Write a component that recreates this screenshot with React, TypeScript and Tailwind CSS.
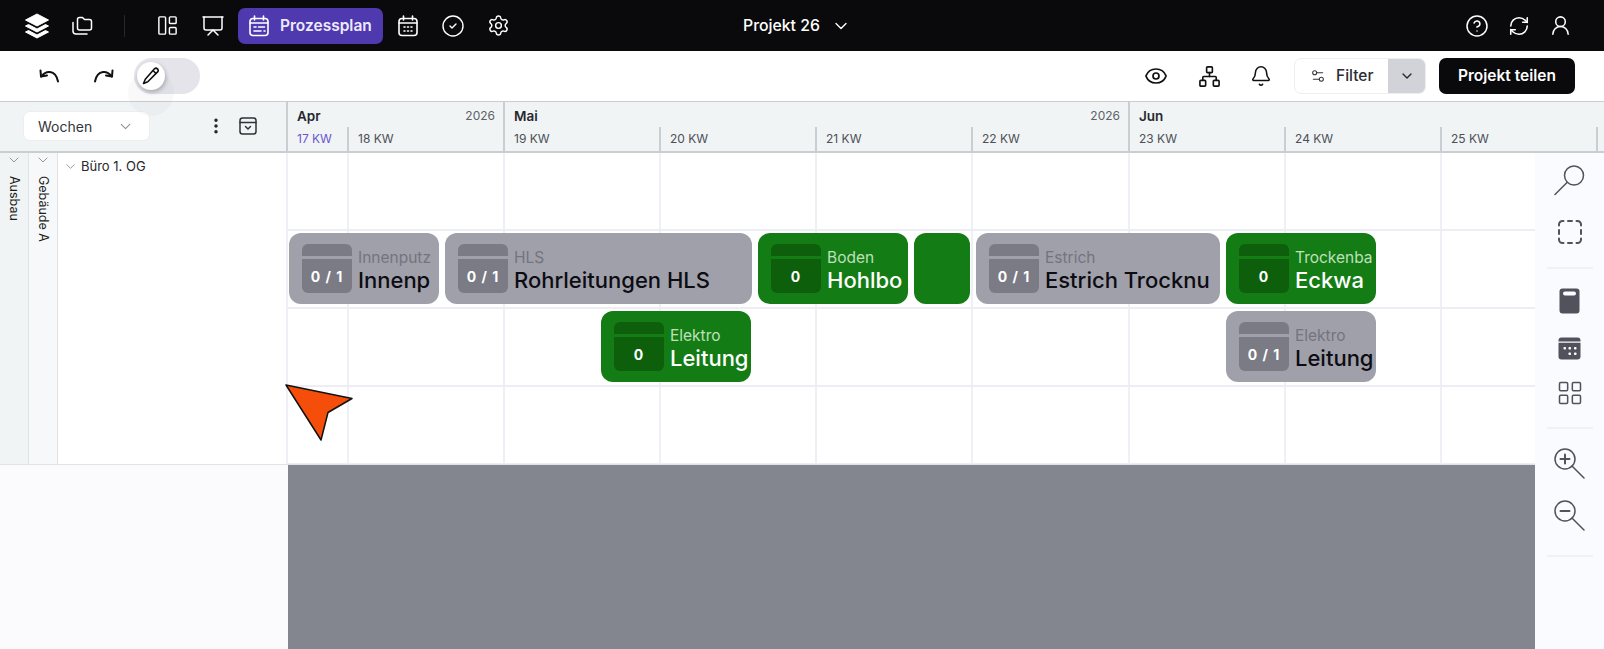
import React from 'react';
import {
  Bell,
  ChevronDown,
  CircleCheck,
  CircleHelp,
  EllipsisVertical,
  Eye,
  LayoutGrid,
  LayoutPanelLeft,
  Network,
  Presentation,
  RefreshCw,
  Settings,
  Settings2,
  UserRound,
} from 'lucide-react';

const font = { fontFamily: 'Inter, "Noto Sans", sans-serif' };

const weeks = [
  { label: '17 KW', width: 'w-[61px]', active: true },
  { label: '18 KW', width: 'w-[156px]' },
  { label: '19 KW', width: 'w-[156px]' },
  { label: '20 KW', width: 'w-[156px]' },
  { label: '21 KW', width: 'w-[156px]' },
  { label: '22 KW', width: 'w-[157px]' },
  { label: '23 KW', width: 'w-[156px]' },
  { label: '24 KW', width: 'w-[156px]' },
  { label: '25 KW', width: 'w-[156px]' },
];

function LogoIcon() {
  return (
    <svg width="28" height="28" viewBox="0 0 28 28" fill="white" stroke="white" strokeWidth="1" strokeLinejoin="round">
      <path d="M14 2 25.500 8 14 14 2.500 8z" />
      <path d="M5.500 12.500 14 17l8.500-4.500 3 1.500L14 20 2.500 14z" />
      <path d="M5.500 18.500 14 23l8.500-4.500 3 1.500L14 26 2.500 20z" />
    </svg>
  );
}

function FoldersIcon() {
  return (
    <svg width="22" height="20" viewBox="0 0 22 20" fill="none" stroke="white" strokeWidth="1.500" strokeLinecap="round" strokeLinejoin="round">
      <path d="M6.500 3.500a2 2 0 0 1 2-2h3l2 2h5a2 2 0 0 1 2 2v6.500a2 2 0 0 1-2 2h-10a2 2 0 0 1-2-2z" />
      <path d="M2 6.500v8.500a3 3 0 0 0 3 3h11" />
    </svg>
  );
}

function PlanIcon() {
  return (
    <svg width="20" height="22" viewBox="0 0 20 22" fill="none" stroke="white" strokeWidth="1.600" strokeLinecap="round">
      <rect x="1" y="3.500" width="18" height="17" rx="3" />
      <path d="M5.500 1v4M14.500 1v4M1 8h18M5 12h2M9.500 12h6M5 16h7M15 16h1" />
    </svg>
  );
}

function CalendarIcon() {
  return (
    <svg width="20" height="22" viewBox="0 0 20 22" fill="none" stroke="white" strokeWidth="1.600" strokeLinecap="round">
      <rect x="1" y="3.500" width="18" height="17" rx="3" />
      <path d="M5.500 1v4M14.500 1v4M1 8h18M6 12h1M9.500 12h1M13 12h1M6 16h1M9.500 16h1M13 16h1" />
    </svg>
  );
}

function CollapseIcon() {
  return (
    <svg width="18" height="18" viewBox="0 0 18 18" fill="none" stroke="#2e3138" strokeWidth="1.500" strokeLinecap="round" strokeLinejoin="round">
      <rect x="1" y="1" width="16" height="16" rx="2.500" />
      <path d="M1 5.500h16M6.500 9.500 9 12l2.500-2.500" />
    </svg>
  );
}

function UndoArrow({ flip }: { flip?: boolean }) {
  return (
    <svg width="21" height="14" viewBox="0 0 21 14" fill="none" stroke="#111" strokeWidth="2" strokeLinecap="round" strokeLinejoin="round" className={flip ? '-scale-x-100' : ''}>
      <path d="M1.500 1.500 2 7.500 8 6.500" />
      <path d="M2 7.500C5 4 8 2.500 11 3c4 .6 7 4 8 9.500" />
    </svg>
  );
}

function PenIcon() {
  return (
    <svg width="18" height="18" viewBox="0 0 18 18" fill="none" stroke="#111" strokeWidth="1.600" strokeLinejoin="round">
      <path d="M12.500 1.800a2.200 2.200 0 0 1 3.100 3.100L5.800 14.700 1.500 16.500l1.800-4.300z" />
      <path d="M11 3.500 14.200 6.700" />
    </svg>
  );
}

function SearchGlass() {
  return (
    <svg width="31" height="31" viewBox="0 0 31 31" fill="none" stroke="#50525c" strokeWidth="1.500" strokeLinecap="round">
      <circle cx="20" cy="10.500" r="9.500" />
      <path d="M13 17.500 1 29.500" />
    </svg>
  );
}

function DashedBox() {
  return (
    <svg width="24" height="24" viewBox="0 0 24 24" fill="none" stroke="#50525c" strokeWidth="2" strokeLinecap="round">
      <path d="M1 5.500V4.500A3.500 3.500 0 0 1 4.500 1h1M10 1h4M18.500 1h1A3.500 3.500 0 0 1 23 4.500v1M23 10v4M23 18.500v1a3.500 3.500 0 0 1-3.500 3.500h-1M14 23h-4M5.500 23h-1A3.500 3.500 0 0 1 1 19.500v-1M1 14v-4" />
    </svg>
  );
}

function ZoomGlass({ plus }: { plus?: boolean }) {
  return (
    <svg width="31" height="31" viewBox="0 0 31 31" fill="none" stroke="#50525c" strokeWidth="1.500" strokeLinecap="round">
      <circle cx="11" cy="11" r="10" />
      <path d="M18 18 30 30" />
      <path d="M6.500 11h9" strokeWidth="2" />
      {plus && <path d="M11 6.500v9" strokeWidth="2" />}
    </svg>
  );
}

function CalculatorSolid() {
  return (
    <svg width="21" height="26" viewBox="0 0 21 26">
      <rect x="0.500" y="0.500" width="20" height="25" rx="3" fill="#50525c" />
      <rect x="4" y="3.500" width="13" height="4" rx="2" fill="white" />
    </svg>
  );
}

function CalendarSolid() {
  return (
    <svg width="23" height="23" viewBox="0 0 23 23">
      <path d="M3.500 0.500h16a3 3 0 0 1 3 3v1H0.500v-1a3 3 0 0 1 3-3z" fill="#50525c" />
      <path d="M0.500 5.800h22v13.700a3 3 0 0 1-3 3h-16a3 3 0 0 1-3-3z" fill="#50525c" />
      <g fill="white">
        <rect x="5.500" y="10" width="2.500" height="2.500" rx="0.800" />
        <rect x="10.500" y="10" width="2.500" height="2.500" rx="0.800" />
        <rect x="16" y="10" width="2.500" height="2.500" rx="0.800" />
        <rect x="10.500" y="15.500" width="2.500" height="2.500" rx="0.800" />
        <rect x="16" y="15.500" width="2.500" height="2.500" rx="0.800" />
      </g>
    </svg>
  );
}

function TopBar() {
  return (
    <div className="h-[51px] bg-[#0a0a0c] flex items-center relative shrink-0 text-white">
      <div className="flex items-center pl-[23px]">
        <LogoIcon />
        <div className="ml-[20px]"><FoldersIcon /></div>
        <div className="w-px h-[22px] bg-[#26262e] ml-[31px]" />
        <LayoutPanelLeft size={23} strokeWidth={1.5} className="ml-[31px]" />
        <Presentation size={24} strokeWidth={1.5} className="ml-[22px]" />
        <div className="ml-[13px] w-[145px] h-[36px] rounded-[7px] bg-[#4f39ae] flex items-center pl-[11px] gap-[11px]">
          <PlanIcon />
          <span className="text-[15.500px] font-semibold leading-none text-[#eeeafc]">Prozessplan</span>
        </div>
        <div className="ml-[15px]"><CalendarIcon /></div>
        <CircleCheck size={24} strokeWidth={1.4} className="ml-[23px]" />
        <Settings size={23} strokeWidth={1.5} className="ml-[22px]" />
      </div>
      <div className="absolute left-[743px] top-0 h-full flex items-center gap-[11px]">
        <span className="text-[15.800px] font-medium">Projekt 26</span>
        <ChevronDown size={20} strokeWidth={1.6} />
      </div>
      <div className="ml-auto flex items-center gap-[19px] pr-[32px]">
        <CircleHelp size={24} strokeWidth={1.5} />
        <RefreshCw size={22} strokeWidth={1.7} />
        <UserRound size={23} strokeWidth={1.6} />
      </div>
    </div>
  );
}

function ToolBar() {
  return (
    <div className="h-[50px] bg-white flex items-center shrink-0 relative z-10">
      <div className="ml-[39px]"><UndoArrow /></div>
      <div className="ml-[33px]"><UndoArrow flip /></div>
      <div className="ml-[20px] w-[66px] h-[36px] rounded-full bg-[#e4e4ea] flex items-center relative">
        <div className="absolute left-[-6px] top-[12px] w-[46px] h-[46px] rounded-full bg-[#8d8d99]/5" />
        <div className="relative ml-[3px] w-[28px] h-[28px] rounded-full bg-white shadow-[1px_2px_4px_rgba(0,0,0,0.25)] flex items-center justify-center">
          <PenIcon />
        </div>
      </div>
      <div className="ml-auto flex items-center pr-[29px]">
        <Eye size={24} strokeWidth={1.7} className="text-[#111]" />
        <Network size={23} strokeWidth={1.7} className="text-[#111] ml-[30px]" />
        <Bell size={22} strokeWidth={1.7} className="text-[#111] ml-[29px]" />
        <div className="ml-[22px] h-[36px] w-[132px] rounded-[7px] border border-[#eceef2] bg-white flex overflow-hidden">
          <div className="flex-1 flex items-center pl-[15px] gap-[10px]">
            <Settings2 size={16} strokeWidth={1.6} className="text-[#33353b]" />
            <span className="text-[15.500px] font-medium text-[#2b2d33]">Filter</span>
          </div>
          <div className="w-[37px] bg-[#d2d3d9] flex items-center justify-center">
            <ChevronDown size={16} strokeWidth={2} className="text-[#26272d]" />
          </div>
        </div>
        <div className="ml-[13px] h-[36px] w-[136px] rounded-[7px] bg-[#0a0a0c] text-white text-[15.500px] font-semibold flex items-center justify-center">
          Projekt teilen
        </div>
      </div>
    </div>
  );
}

function TimelineHeader() {
  return (
    <div className="h-[51.500px] bg-[#f1f4f5] border-t border-b-2 border-[#c9ced3] flex shrink-0">
      <div className="w-[288px] shrink-0 border-r-2 border-[#c9ced3] flex items-center pl-[23px]">
        <div className="w-[127px] h-[30px] bg-white rounded-[7px] border border-[#eceef0] flex items-center justify-between pl-[14px] pr-[15px]">
          <span className="text-[14px] text-[#33353b]">Wochen</span>
          <ChevronDown size={17} strokeWidth={1.5} className="text-[#8b8e96]" />
        </div>
        <EllipsisVertical size={20} strokeWidth={2.200} className="ml-[56px] text-[#26272d]" />
        <div className="ml-[13px]"><CollapseIcon /></div>
      </div>
      <div className="flex-1 flex flex-col min-w-0">
        <div className="h-[25px] flex shrink-0">
          <div className="w-[217px] border-r-2 border-[#c9ced3] flex items-end justify-between pl-[9px] pr-[8px]">
            <span className="text-[13.500px] font-semibold text-[#26272d] leading-[22px]">Apr</span>
            <span className="text-[12px] text-[#5e6168] leading-[22px]">2026</span>
          </div>
          <div className="w-[625px] border-r-2 border-[#c9ced3] flex items-end justify-between pl-[9px] pr-[8px]">
            <span className="text-[13.500px] font-semibold text-[#26272d] leading-[22px]">Mai</span>
            <span className="text-[12px] text-[#5e6168] leading-[22px]">2026</span>
          </div>
          <div className="flex-1 flex items-end pl-[9px]">
            <span className="text-[13.500px] font-semibold text-[#26272d] leading-[22px]">Jun</span>
          </div>
        </div>
        <div className="flex-1 flex">
          {weeks.map((week) => (
            <div
              key={week.label}
              className={`${week.width} shrink-0 border-r-2 border-[#c9ced3] flex items-center pl-[9px] text-[12px] ${week.active ? 'text-[#6a55cf] pl-[8px]' : 'text-[#4c4f56]'}`}
            >
              {week.label}
            </div>
          ))}
        </div>
      </div>
    </div>
  );
}

type BarProps = {
  width: string;
  green?: boolean;
  label?: string;
  title?: string;
  count?: string;
};

function Bar({ width, green, label, title, count }: BarProps) {
  return (
    <div className={`${width} h-[71px] shrink-0 rounded-[12px] overflow-hidden flex items-center pl-[13px] pr-[2px] ${green ? 'bg-[#137c14]' : 'bg-[#a0a0aa]'}`}>
      {count && (
        <>
          <div className={`w-[50px] h-[49px] shrink-0 rounded-[6px] overflow-hidden flex flex-col gap-[3px] ${green ? 'bg-[#137c14]' : 'bg-[#a0a0aa]'}`}>
            <div className={`h-[12px] ${green ? 'bg-[#0e5f0c]' : 'bg-[#7b7b85]'}`} />
            <div className={`flex-1 flex items-center justify-center text-white text-[14px] font-bold tracking-[1px] ${green ? 'bg-[#0e5f0c]' : 'bg-[#7b7b85]'}`}>
              {count}
            </div>
          </div>
          <div className="ml-[6px] min-w-0 flex-1 overflow-hidden whitespace-nowrap pt-[4px]">
            <div className={`text-[15.500px] leading-[18px] ${green ? 'text-[#bfe0bd]' : 'text-[#74747e]'}`}>{label}</div>
            <div className={`text-[22px] font-medium leading-[26px] ${green ? 'text-white' : 'text-[#0c0c12]'}`}>{title}</div>
          </div>
        </>
      )}
    </div>
  );
}

function GridLines() {
  return (
    <div className="absolute inset-0 flex">
      {weeks.map((week) => (
        <div key={week.label} className={`${week.width} shrink-0 border-r-2 border-[#eef0f6]`} />
      ))}
    </div>
  );
}

function Row({ className, children }: { className?: string; children?: React.ReactNode }) {
  return (
    <div className={`h-[78px] relative border-b-2 border-[#eceef3] flex items-center shrink-0 ${className ?? ''}`}>
      <GridLines />
      <div className="relative flex gap-[6px] w-full">{children}</div>
    </div>
  );
}

function SideBar() {
  return (
    <div className="w-[69px] shrink-0 bg-[#fafbfe] flex flex-col items-center pt-[12px]">
      <SearchGlass />
      <div className="mt-[24px]"><DashedBox /></div>
      <div className="w-[46px] h-[2px] bg-[#f0f1f5] mt-[23px]" />
      <div className="mt-[19px]"><CalculatorSolid /></div>
      <div className="mt-[23px]"><CalendarSolid /></div>
      <LayoutGrid size={28} strokeWidth={1.300} className="mt-[19px] text-[#50525c]" />
      <div className="w-[46px] h-[2px] bg-[#f0f1f5] mt-[20px]" />
      <div className="mt-[19px]"><ZoomGlass plus /></div>
      <div className="mt-[21px]"><ZoomGlass /></div>
      <div className="w-[46px] h-[2px] bg-[#f0f1f5] mt-[24px]" />
    </div>
  );
}

export default function App() {
  return (
    <div className="w-[1604px] h-[649px] overflow-hidden flex flex-col bg-white relative" style={font}>
      <TopBar />
      <ToolBar />
      <TimelineHeader />
      <div className="flex-1 flex min-h-0">
        <div className="flex-1 flex flex-col min-w-0">
          <div className="h-[311px] flex shrink-0">
            <div className="w-[288px] shrink-0 flex">
              <div className="w-[29px] bg-[#f1f4f5] border-r border-[#dfe2e6] flex flex-col items-center">
                <ChevronDown size={16} strokeWidth={1.400} className="text-[#8b8e96] mt-[-1px]" />
                <span className="text-[12.500px] text-[#1c1d22] mt-[8px] [writing-mode:vertical-rl]">Ausbau</span>
              </div>
              <div className="w-[29px] bg-[#f7f8f9] border-r border-[#dfe2e6] flex flex-col items-center">
                <ChevronDown size={16} strokeWidth={1.400} className="text-[#8b8e96] mt-[-1px]" />
                <span className="text-[12.500px] text-[#1c1d22] mt-[8px] [writing-mode:vertical-rl]">Gebäude A</span>
              </div>
              <div className="flex-1 flex items-start pl-[5px] pt-[4px] gap-[3px] border-r-2 border-[#eef0f6]">
                <ChevronDown size={15} strokeWidth={1.400} className="text-[#8b8e96] mt-[2px]" />
                <span className="text-[13px] text-[#26272d] leading-[18px]">Büro 1. OG</span>
              </div>
            </div>
            <div className="flex-1 flex flex-col min-w-0 overflow-hidden">
              <Row />
              <Row className="pl-[1px]">
                <Bar width="w-[150px]" label="Innenputz" title="Innenp" count="0 / 1" />
                <Bar width="w-[307px]" label="HLS" title="Rohrleitungen HLS" count="0 / 1" />
                <Bar width="w-[150px]" green label="Boden" title="Hohlbo" count="0" />
                <Bar width="w-[56px]" green />
                <Bar width="w-[244px]" label="Estrich" title="Estrich Trocknu" count="0 / 1" />
                <Bar width="w-[150px]" green label="Trockenba" title="Eckwa" count="0" />
              </Row>
              <Row>
                <div className="ml-[313px]">
                  <Bar width="w-[150px]" green label="Elektro" title="Leitung" count="0" />
                </div>
                <div className="ml-[469px]">
                  <Bar width="w-[150px]" label="Elektro" title="Leitung" count="0 / 1" />
                </div>
              </Row>
              <Row className="border-b-0" />
            </div>
          </div>
          <div className="flex-1 flex border-t border-[#dfe2e6]">
            <div className="w-[288px] shrink-0 bg-[#fbfbfe]" />
            <div className="flex-1 bg-[#83868e]" />
          </div>
        </div>
        <SideBar />
      </div>
      {/* pointer that sits over the chart */}
      <svg className="absolute left-[283px] top-[383px]" width="72" height="60" viewBox="0 0 72 60">
        <path d="M3 2 69 15.500 45 29.500 38 57z" fill="#f54e0a" stroke="#111" strokeWidth="1.500" strokeLinejoin="round" />
      </svg>
    </div>
  );
}
